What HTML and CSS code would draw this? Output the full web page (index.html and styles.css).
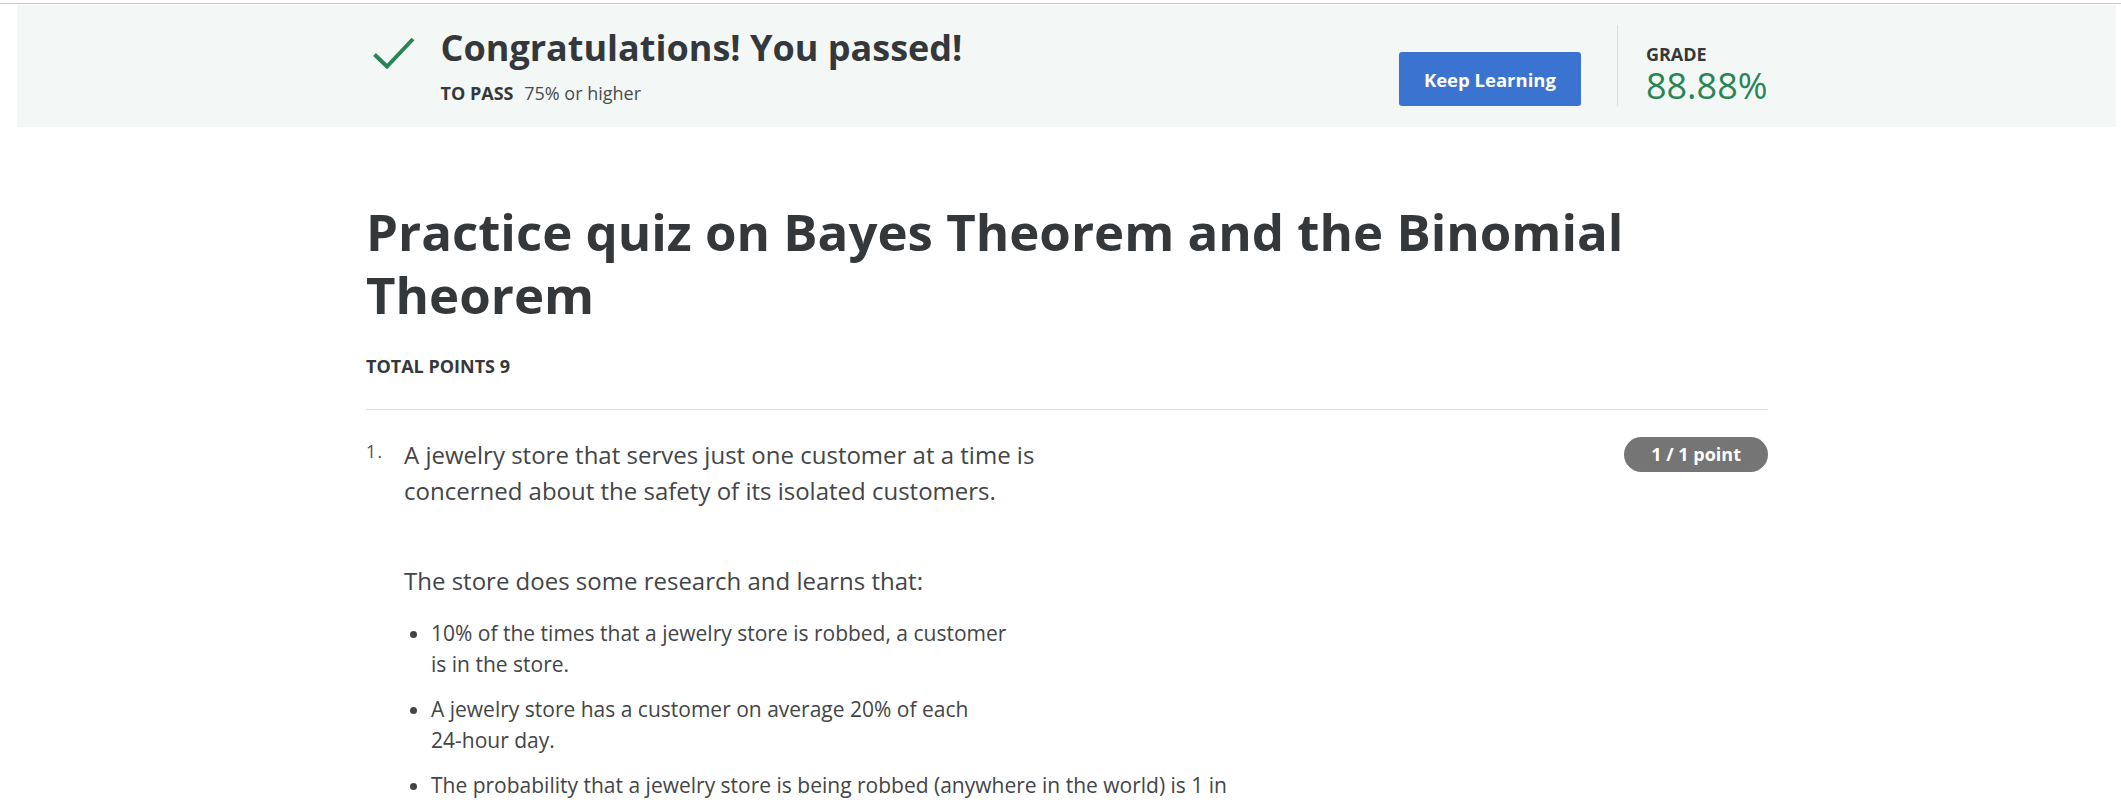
FILE: index.html
```html
<!DOCTYPE html>
<html lang="en">
<head>
<meta charset="utf-8">
<title>Practice quiz on Bayes Theorem and the Binomial Theorem</title>
<link rel="stylesheet" href="styles.css">
</head>
<body>
<div class="topline"></div>
<div class="page">
  <section class="banner">
    <div class="banner-inner">
      <div class="result">
        <svg class="check" width="42" height="32" viewBox="0 0 42 32" aria-hidden="true">
          <path d="M1.5 17.5 L14 29.5 L40 2" fill="none" stroke="#2a8454" stroke-width="4"/>
        </svg>
        <div class="result-text">
          <h2 class="congrats">Congratulations! You passed!</h2>
          <p class="topass"><span class="topass-label">TO PASS</span> 75% or higher</p>
        </div>
      </div>
      <div class="actions">
        <button class="btn-primary" type="button">Keep Learning</button>
        <div class="divider"></div>
        <div class="grade">
          <div class="grade-label">GRADE</div>
          <div class="grade-value">88.88%</div>
        </div>
      </div>
    </div>
  </section>
  <main class="content">
    <h1 class="quiz-title">Practice quiz on Bayes Theorem and the Binomial Theorem</h1>
    <div class="total-points">TOTAL POINTS 9</div>
    <hr class="rule">
    <div class="question">
      <div class="qnum">1.</div>
      <div class="qbody">
        <p class="q-intro">A jewelry store that serves just one customer at a time is<br>concerned about the safety of its isolated customers.</p>
        <p class="q-lead">The store does some research and learns that:</p>
        <ul class="q-list">
          <li>10% of the times that a jewelry store is robbed, a customer<br>is in the store.</li>
          <li>A jewelry store has a customer on average 20% of each<br>24-hour day.</li>
          <li>The probability that a jewelry store is being robbed (anywhere in the world) is 1 in</li>
        </ul>
      </div>
      <div class="badge">1 / 1 point</div>
    </div>
  </main>
</div>
</body>
</html>
```

FILE: styles.css
```css
* { box-sizing: border-box; }

html, body {
  margin: 0;
  padding: 0;
  background: #ffffff;
}

body {
  font-family: "Open Sans", "Noto Sans", sans-serif;
  color: #373a3c;
  overflow: hidden;
}

.topline {
  margin-top: 3px;
  height: 1px;
  background: #c8c8c8;
}

.page {
  margin: 0 5px 0 18px;
}

.banner {
  margin-top: 1px;
  margin-left: -1px;
  background: #f3f8f6;
  padding: 20px 0 21px;
}

.banner-inner,
.content {
  width: 1402px;
  margin: 0 auto;
}

.banner-inner {
  display: flex;
  justify-content: space-between;
  align-items: stretch;
}

.result {
  display: flex;
  align-items: flex-start;
}

.check {
  display: block;
  margin: 12px 26px 0 7px;
  flex: none;
}

.congrats {
  margin: 0;
  font-size: 36px;
  line-height: 46px;
  font-weight: 700;
  color: #35383b;
}

.topass {
  margin: 10px 0 0;
  font-size: 18px;
  line-height: 24px;
  color: #4a4c4e;
}

.topass-label {
  font-weight: 700;
  color: #35383b;
  margin-right: 6px;
}

.actions {
  display: flex;
  align-items: flex-end;
}

.btn-primary {
  height: 54px;
  padding: 0 25px;
  border: none;
  border-radius: 3px;
  background: #3b74d0;
  color: #ffffff;
  font-family: "Open Sans", "Noto Sans", sans-serif;
  font-size: 18.5px;
  font-weight: 700;
  cursor: pointer;
}

.divider {
  width: 1px;
  height: 81px;
  background: #dcdfdd;
  margin: 0 28px 0 36px;
}

.grade {
  display: flex;
  flex-direction: column;
}

.grade-label {
  font-size: 18px;
  line-height: 22px;
  font-weight: 700;
  color: #35383b;
}

.grade-value {
  margin-top: 1px;
  font-size: 36px;
  line-height: 40px;
  color: #2a8454;
}

.quiz-title {
  margin: 73px 0 0;
  font-size: 51px;
  line-height: 63px;
  font-weight: 700;
  color: #35383b;
}

.total-points {
  margin-top: 28px;
  font-size: 18px;
  line-height: 24px;
  font-weight: 700;
  color: #35383b;
}

.rule {
  margin: 31px 0 0;
  border: none;
  height: 1px;
  background: #e1e1e1;
}

.question {
  display: flex;
  align-items: flex-start;
  margin-top: 27px;
}

.qnum {
  flex: none;
  width: 38px;
  font-size: 17.5px;
  line-height: 29px;
  letter-spacing: 1.5px;
  color: #505254;
}

.qbody {
  flex: 1;
  color: #434547;
}

.q-intro,
.q-lead {
  margin: 0;
  font-size: 24px;
  line-height: 36px;
}

.q-intro {
  margin-bottom: 54px;
}

.q-list {
  margin: 19px 0 0;
  padding-left: 27px;
  font-size: 21px;
  line-height: 31px;
}

.q-list li {
  margin-bottom: 14px;
}

.badge {
  flex: none;
  height: 35px;
  padding: 0 27px;
  border-radius: 18px;
  background: #757575;
  color: #ffffff;
  font-size: 18px;
  line-height: 35px;
  font-weight: 700;
  white-space: nowrap;
}
```
